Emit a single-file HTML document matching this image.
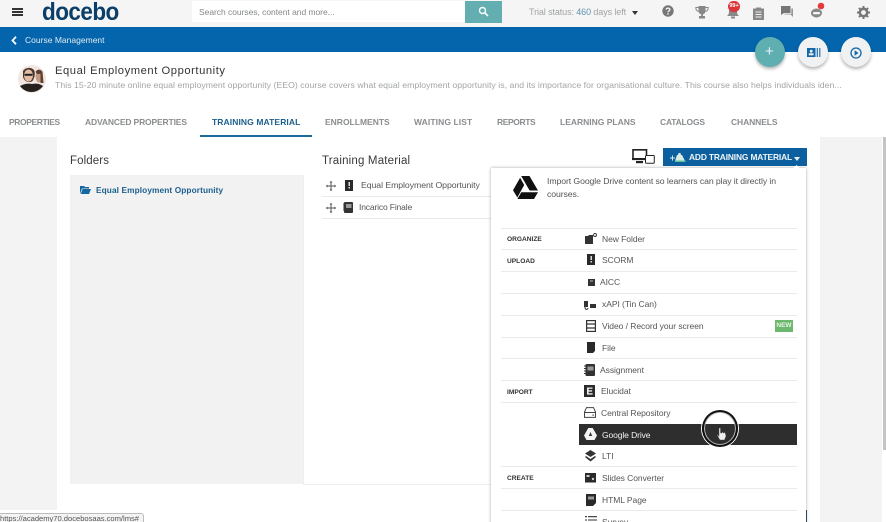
<!DOCTYPE html>
<html><head><meta charset="utf-8"><style>
html,body{margin:0;padding:0;width:886px;height:522px;overflow:hidden;background:#fff}
#w{position:relative;width:886px;height:522px;overflow:hidden;background:#fff;font-family:"Liberation Sans",sans-serif;filter:blur(.35px)}
.a,.t{position:absolute}
.t{white-space:nowrap;line-height:14px}
.tab{top:115px;font-size:8.5px;font-weight:bold;color:#8a8d8f}
.m{font-size:8.5px;color:#555;letter-spacing:-.05px}
.s{font-size:6.6px;font-weight:bold;color:#333;left:507px}
.l{position:absolute;left:501px;width:296px;height:1px;background:#ebebeb}
svg{position:absolute;overflow:visible}
</style></head><body><div id="w">
<!-- page backgrounds -->
<div class="a" style="left:0;top:137px;width:57px;height:373px;background:#f3f3f3"></div>
<div class="a" style="left:820px;top:137px;width:62px;height:385px;background:#f3f3f3"></div>
<div class="a" style="left:883px;top:137px;width:3px;height:313px;background:#c4c4c4"></div>

<!-- top bar -->
<div class="a" style="left:0;top:0;width:886px;height:27px;background:#f5f5f5"></div>
<div class="a" style="left:12px;top:8px;width:11px;height:2px;background:#333"></div>
<div class="a" style="left:12px;top:11px;width:11px;height:2px;background:#333"></div>
<div class="a" style="left:12px;top:14px;width:11px;height:2px;background:#333"></div>
<div class="t" style="left:42px;top:0;font-size:25px;line-height:24px;font-weight:bold;color:#0b3f69;letter-spacing:-.6px;transform:scaleX(.9);transform-origin:0 0">docebo</div>
<div class="a" style="left:115px;top:8px;width:2px;height:2px;border-radius:50%;background:#0b3f69"></div>
<div class="a" style="left:192px;top:1px;width:273px;height:21px;background:#fff"></div>
<div class="t" style="left:199px;top:5px;font-size:8.5px;color:#85888a;letter-spacing:-.04px">Search courses, content and more...</div>
<div class="a" style="left:465px;top:1px;width:37px;height:22px;background:#62aeb0"></div>
<svg style="left:478px;top:6px" width="11" height="11" viewBox="0 0 11 11"><circle cx="4.5" cy="4.5" r="3" fill="none" stroke="#fff" stroke-width="1.4"/><path d="M7 7l3 3" stroke="#fff" stroke-width="1.6"/></svg>
<div class="t" style="left:529px;top:5px;font-size:9px;color:#a0a3a5;letter-spacing:-.1px">Trial status: <span style="color:#5f8fb0">460</span> days left</div>
<div class="a" style="left:632px;top:11px;border:3.5px solid transparent;border-top:4px solid #333;border-bottom:0"></div>
<!-- help -->
<svg style="left:662px;top:5px" width="12" height="12" viewBox="0 0 12 12"><circle cx="6" cy="6" r="5.7" fill="#777"/><path d="M4.2 4.6C4.3 2.6 7.9 2.7 7.9 4.6 7.9 5.9 6 5.9 6 7.3" fill="none" stroke="#f5f5f5" stroke-width="1.3"/><rect x="5.3" y="8.2" width="1.4" height="1.4" fill="#f5f5f5"/></svg>
<!-- trophy -->
<svg style="left:695px;top:6px" width="14" height="13" viewBox="0 0 14 13"><path d="M3.5 0h7v5c0 2-1.5 3-2.6 3.3V10H10v2.5H4V10h2.100V8.300C5 8 3.500 7 3.500 5z" fill="#888"/><path d="M3.500 1.500H.8c0 2.500 1 3.700 3 3.900M10.500 1.500h2.700c0 2.500-1 3.700-3 3.900" fill="none" stroke="#888" stroke-width="1"/></svg>
<!-- bell -->
<svg style="left:726px;top:7px" width="14" height="12" viewBox="0 0 14 12"><path d="M7 0c3 0 4 2 4 5 0 2 1 3 2 4H1c1-1 2-2 2-4 0-3 1-5 4-5z" fill="#888"/><rect x="5" y="9.500" width="4" height="2" fill="#888"/></svg>
<div class="a" style="left:728px;top:1px;width:12px;height:11px;border-radius:6px;background:#d9363a;color:#fff;font-size:5.5px;font-weight:bold;line-height:11px;text-align:center">99+</div>
<!-- clipboard -->
<svg style="left:753px;top:7px" width="11" height="13" viewBox="0 0 11 13"><path d="M0 1.500h3V.5h5v1h3V13H0z" fill="#888"/><path d="M2.500 5h6M2.500 7.500h6M2.500 10h6" stroke="#f5f5f5" stroke-width="1"/></svg>
<!-- chat -->
<svg style="left:781px;top:6px" width="12" height="11" viewBox="0 0 12 11"><path d="M0 0h9.500v7H3L0 9z" fill="#777"/><path d="M10.300 2.500H12V11L9.500 8.500H3.500V7.800h6.800z" fill="#999"/></svg>
<!-- bot -->
<svg style="left:811px;top:3px" width="14" height="14" viewBox="0 0 14 14"><ellipse cx="5.500" cy="10" rx="5.500" ry="4.500" fill="#888"/><rect x="2" y="9" width="7" height="2.300" rx="1.100" fill="#f5f5f5"/><circle cx="10" cy="3" r="3.300" fill="#e23b3b"/></svg>
<!-- gear -->
<svg style="left:857px;top:6px" width="13" height="13" viewBox="0 0 13 13"><circle cx="6.500" cy="6.500" r="3.700" fill="none" stroke="#777" stroke-width="2.600"/><path d="M6.500 0v13M0 6.500h13M1.900 1.900l9.200 9.200M11.100 1.900l-9.200 9.200" stroke="#777" stroke-width="2" stroke-dasharray="2.200 8.600 2.200"/></svg>

<!-- blue bar -->
<div class="a" style="left:0;top:27px;width:886px;height:25px;background:#0465ac"></div>
<svg style="left:11px;top:36px" width="6" height="9" viewBox="0 0 6 9"><path d="M5 .8L1.500 4.500 5 8.200" fill="none" stroke="#fff" stroke-width="1.800"/></svg>
<div class="t" style="left:25px;top:33px;font-size:8.500px;color:#dfeaf3;letter-spacing:.01px">Course Management</div>

<!-- round buttons -->
<div class="a" style="left:755px;top:37px;width:30px;height:30px;border-radius:50%;background:#5faeb0;box-shadow:0 2px 3px rgba(0,0,0,.3)"></div>
<div class="t" style="left:765px;top:45px;font-size:15px;color:#eef;">+</div>
<div class="a" style="left:798px;top:37px;width:30px;height:30px;border-radius:50%;background:#eff1f2;box-shadow:0 2px 3px rgba(0,0,0,.3)"></div>
<svg style="left:807px;top:48px" width="14" height="9" viewBox="0 0 14 9"><rect width="8.500" height="9" fill="#1467a8"/><circle cx="4.200" cy="3.200" r="1.400" fill="#eff1f2"/><rect x="1.800" y="5.300" width="4.800" height="2" fill="#eff1f2"/><path d="M10.300 0v9M12.800 0v9" stroke="#1467a8" stroke-width="1.100"/></svg>
<div class="a" style="left:841px;top:37px;width:30px;height:30px;border-radius:50%;background:#eff1f2;box-shadow:0 2px 3px rgba(0,0,0,.3)"></div>
<svg style="left:850px;top:47px" width="12" height="12" viewBox="0 0 12 12"><circle cx="6" cy="6" r="5" fill="none" stroke="#1467a8" stroke-width="1.300"/><path d="M4.600 3.300L8.500 6 4.600 8.700z" fill="#1467a8"/></svg>

<!-- course header -->
<svg style="left:18px;top:65px" width="28" height="28" viewBox="0 0 28 28"><circle cx="14" cy="14" r="14" fill="#f2e6e0"/><path d="M2 21c4-2 8-3 12-2 5-1 8 0 11 2a14 14 0 0 1-23 0z" fill="#26211f"/><path d="M5 6c3-4 8-4 11-1 1 2 1 5 0 8-1 3-2 4-5 4-3 0-5-2-6-5z" fill="#4a352b"/><ellipse cx="10.500" cy="10.500" rx="4.500" ry="6" fill="#e4bba5"/><rect x="6.500" y="8.800" width="8" height="2" fill="#222"/><ellipse cx="21" cy="11" rx="3.500" ry="6.500" fill="#c49a82"/><path d="M17.500 7c1-3 6-3 7 0l1 11h-3V9h-3z" fill="#5d4033"/></svg>
<div class="t" style="left:55px;top:64px;font-size:11.200px;color:#333;letter-spacing:.56px">Equal Employment Opportunity</div>
<div class="t" style="left:55px;top:78px;font-size:8.700px;color:#a2a4a6;letter-spacing:.04px">This 15-20 minute online equal employment opportunity (EEO) course covers what equal employment opportunity is, and its importance for organisational culture. This course also helps individuals iden...</div>

<!-- tabs -->
<div class="t tab" style="left:9px;letter-spacing:-.4px">PROPERTIES</div>
<div class="t tab" style="left:85px;letter-spacing:-.15px">ADVANCED PROPERTIES</div>
<div class="t tab" style="left:212px;color:#1c5f8e;letter-spacing:.1px">TRAINING MATERIAL</div>
<div class="t tab" style="left:325px">ENROLLMENTS</div>
<div class="t tab" style="left:414px;letter-spacing:.1px">WAITING LIST</div>
<div class="t tab" style="left:497px;letter-spacing:-.4px">REPORTS</div>
<div class="t tab" style="left:560px">LEARNING PLANS</div>
<div class="t tab" style="left:660px;letter-spacing:-.2px">CATALOGS</div>
<div class="t tab" style="left:731px;letter-spacing:-.1px">CHANNELS</div>
<div class="a" style="left:200px;top:135px;width:112px;height:2px;background:#1c6a9e"></div>

<!-- panels -->
<div class="t" style="left:70px;top:154px;font-size:11.500px;color:#3a3a3a;letter-spacing:.1px">Folders</div>
<div class="t" style="left:322px;top:154px;font-size:11.500px;color:#3a3a3a;letter-spacing:.18px">Training Material</div>
<div class="a" style="left:70px;top:175px;width:233px;height:309px;background:#f2f2f2"></div>
<div class="a" style="left:303px;top:175px;width:188px;height:309px;border-bottom:1px solid #eee"></div>
<div class="a" style="left:303px;top:175px;width:1px;height:309px;background:#eee"></div>
<svg style="left:80px;top:186px" width="11" height="8" viewBox="0 0 11 8"><path d="M0 8V0h4l1 1h4v1.500H2L0 8z" fill="#1467a0"/><path d="M2.600 3H11L9 8H.8z" fill="#1467a0"/></svg>
<div class="t" style="left:96px;top:183px;font-size:8.300px;font-weight:bold;color:#1c5f8e;letter-spacing:.1px">Equal Employment Opportunity</div>
<svg style="left:326px;top:181px" width="10" height="10" viewBox="0 0 10 10"><path d="M5 0v10M0 5h10" stroke="#555" stroke-width="1"/><path d="M3.500 1.500L5 0l1.500 1.500zM3.500 8.500L5 10l1.500-1.500zM1.500 3.500L0 5l1.500 1.500zM8.500 3.500L10 5 8.500 6.500z" fill="#555"/></svg>
<svg style="left:345px;top:180px" width="8" height="11" viewBox="0 0 8 11"><rect width="8" height="11" fill="#2a2a2a"/><rect x="3.500" y="2" width="1.500" height="4" fill="#ddd"/><rect x="3.500" y="7" width="1.500" height="1.500" fill="#ddd"/></svg>
<div class="t" style="left:361px;top:178px;font-size:8.700px;color:#555;letter-spacing:-.05px">Equal Employment Opportunity</div>
<div class="a" style="left:322px;top:196px;width:169px;height:1px;background:#eaeaea"></div>
<svg style="left:326px;top:203px" width="10" height="10" viewBox="0 0 10 10"><path d="M5 0v10M0 5h10" stroke="#555" stroke-width="1"/><path d="M3.500 1.500L5 0l1.500 1.500zM3.500 8.500L5 10l1.500-1.500zM1.500 3.500L0 5l1.500 1.500zM8.500 3.500L10 5 8.500 6.500z" fill="#555"/></svg>
<svg style="left:343px;top:202px" width="10" height="11" viewBox="0 0 10 11"><rect x="1" width="9" height="11" rx="1" fill="#333"/><rect x="3" y="2" width="5.500" height="4" fill="#999"/><path d="M0 2h1M0 4h1M0 6h1M0 8h1" stroke="#333"/></svg>
<div class="t" style="left:359px;top:200px;font-size:8.500px;color:#555;letter-spacing:-.15px">Incarico Finale</div>
<div class="a" style="left:322px;top:218px;width:169px;height:1px;background:#eaeaea"></div>

<!-- device icon -->
<svg style="left:632px;top:149px" width="23" height="16" viewBox="0 0 23 16"><path d="M1 .8h13.500v9.500H1z" fill="none" stroke="#222" stroke-width="1.600"/><rect x="0" y="9" width="15" height="2" fill="#222"/><rect x="4" y="12" width="7" height="2.200" fill="#222"/><rect x="13.500" y="6.500" width="8.800" height="7.800" rx="1" fill="#fff" stroke="#222" stroke-width="1"/></svg>

<!-- add button -->
<div class="a" style="left:663px;top:148px;width:144px;height:18px;background:#0c609f"></div>
<svg style="left:670px;top:152px" width="16" height="10" viewBox="0 0 16 10"><path d="M0 6h5M2.500 3.500v5" stroke="#d8e8f0" stroke-width="1"/><path d="M5 9l2-6h1l.5-2h2l.5 2h1l3 6z" fill="#d8ece6"/><rect x="5" y="8.500" width="10.500" height="1.500" fill="#5fc0a0"/></svg>
<div class="t" style="left:689px;top:150px;font-size:8.400px;font-weight:bold;color:#f0f5f8;letter-spacing:-.14px">ADD TRAINING MATERIAL</div>

<!-- dropdown -->
<div class="a" style="left:491px;top:168px;width:315px;height:360px;background:#fff;box-shadow:0 0 3px rgba(0,0,0,.35)"></div>
<div class="a" style="left:794px;top:166px;width:5px;height:5px;background:#fff;transform:rotate(45deg)"></div>
<div class="a" style="left:794px;top:157px;border:3px solid transparent;border-top:4px solid #e8eef3;border-bottom:0"></div>
<svg style="left:513px;top:176px" width="25" height="23" viewBox="0 0 25 23"><path d="M8.200 0h8.300l8.500 14.500h-8.400zM7.100 1.800L11.200 9 4.300 21.500 0 14.300zM8.300 16.200H25l-4 6.800H4.400z" fill="#111"/></svg>
<div class="t" style="left:547px;top:175px;font-size:8.700px;color:#555;line-height:13px;letter-spacing:-.09px">Import Google Drive content so learners can play it directly in<br>courses.</div>

<div class="l" style="top:228px"></div><div class="l" style="top:249px"></div><div class="l" style="top:271px"></div><div class="l" style="top:293px"></div><div class="l" style="top:315px"></div><div class="l" style="top:337px"></div><div class="l" style="top:358px"></div><div class="l" style="top:380px"></div><div class="l" style="top:402px"></div><div class="l" style="top:466px"></div><div class="l" style="top:488px"></div><div class="l" style="top:510px"></div>

<div class="t s" style="top:233px">ORGANIZE</div>
<div class="t s" style="top:255px">UPLOAD</div>
<div class="t s" style="top:386px">IMPORT</div>
<div class="t s" style="top:472px">CREATE</div>

<svg style="left:585px;top:233px" width="12" height="11" viewBox="0 0 12 11"><path d="M0 3h3l1-1h4v9H0z" fill="#333"/><circle cx="10" cy="2" r="1.500" fill="none" stroke="#333" stroke-width=".9"/></svg>
<div class="t m" style="left:602px;top:232px">New Folder</div>
<svg style="left:587px;top:254px" width="8" height="12" viewBox="0 0 8 12"><rect width="8" height="11" fill="#2a2a2a"/><rect x="3.500" y="2" width="1.500" height="4" fill="#ddd"/><rect x="3.500" y="7" width="1.500" height="1.500" fill="#ddd"/></svg>
<div class="t m" style="left:602px;top:253px">SCORM</div>
<svg style="left:588px;top:279px" width="7" height="7" viewBox="0 0 7 7"><rect width="7" height="7" fill="#333"/><rect x="2" y="1.500" width="3" height="1" fill="#bbb"/></svg>
<div class="t m" style="left:600px;top:275px">AICC</div>
<svg style="left:584px;top:301px" width="13" height="9" viewBox="0 0 13 9"><rect x="0" y="0" width="4" height="6" fill="#333"/><path d="M1 6c0 3 3 3 3 1" fill="none" stroke="#333"/><rect x="6" y="3" width="6" height="4" fill="#333"/></svg>
<div class="t m" style="left:602px;top:297px">xAPI (Tin Can)</div>
<svg style="left:586px;top:320px" width="10" height="12" viewBox="0 0 10 12"><rect x=".6" y=".6" width="8.800" height="10.800" fill="none" stroke="#333" stroke-width="1.200"/><path d="M0 4h10M0 8h10" stroke="#333" stroke-width="1.200"/></svg>
<div class="t m" style="left:602px;top:319px">Video / Record your screen</div>
<div class="a" style="left:775px;top:320px;width:18px;height:12px;background:#6cb86c;color:#e8f4e8;font-size:6.500px;font-weight:bold;line-height:12px;text-align:center">NEW</div>
<svg style="left:587px;top:342px" width="8" height="11" viewBox="0 0 8 11"><path d="M0 0h8v9l-2 2H0z" fill="#2a2a2a"/></svg>
<div class="t m" style="left:602px;top:341px">File</div>
<svg style="left:584px;top:364px" width="11" height="12" viewBox="0 0 11 12"><rect x="1.500" width="9.500" height="12" rx="1" fill="#333"/><rect x="3.500" y="2.500" width="6" height="4" fill="#999"/><path d="M0 2h1.500M0 4.500h1.500M0 7h1.500M0 9.500h1.500" stroke="#333"/></svg>
<div class="t m" style="left:600px;top:363px">Assignment</div>
<svg style="left:584px;top:385px" width="11" height="12" viewBox="0 0 11 12"><rect width="11" height="12" fill="#2a2a2a"/><path d="M3 2.500h5.500v1.300H4.600v1.500h3.500v1.300H4.600v1.700h4v1.300H3z" fill="#eee"/></svg>
<div class="t m" style="left:601px;top:384px">Elucidat</div>
<svg style="left:584px;top:407px" width="12" height="11" viewBox="0 0 12 11"><path d="M2.500 .6h7L11.500 5v5.400H.5V5zM.5 5.500h11" fill="none" stroke="#444" stroke-width="1"/><rect x="8.500" y="7.500" width="1.300" height="1.300" fill="#444"/></svg>
<div class="t m" style="left:601px;top:406px">Central Repository</div>

<div class="a" style="left:579px;top:424px;width:218px;height:21px;background:#2e2e2e"></div>
<svg style="left:584px;top:428px" width="13" height="12" viewBox="0 0 13 12"><path d="M4.300 0h4.400L13 7.500 10.500 12h-8L0 7.500z" fill="#f4f4f4"/><path d="M6.500 4L8.200 8H4.800z" fill="#333"/></svg>
<div class="t" style="left:602px;top:428px;font-size:8.500px;color:#f2f2f2;letter-spacing:-.1px">Google Drive</div>

<svg style="left:585px;top:450px" width="11" height="12" viewBox="0 0 11 12"><path d="M5.500 0L11 3.500 5.500 7 0 3.500z" fill="#333"/><path d="M1 6l4.500 3L10 6l1 1-5.500 4.500L0 7z" fill="#333"/></svg>
<div class="t m" style="left:602px;top:449px">LTI</div>
<svg style="left:585px;top:473px" width="12" height="10" viewBox="0 0 12 10"><rect width="11" height="9.500" fill="#2a2a2a"/><rect x="1.500" y="2" width="3" height="2" fill="#ccc"/><circle cx="8" cy="6" r="1.200" fill="#ccc"/></svg>
<div class="t m" style="left:602px;top:471px">Slides Converter</div>
<svg style="left:586px;top:494px" width="10" height="12" viewBox="0 0 10 12"><path d="M0 0h10v9l-3 3H0z" fill="#2a2a2a"/><rect x="2" y="2.500" width="6" height="3" fill="#999"/></svg>
<div class="t m" style="left:602px;top:493px">HTML Page</div>
<svg style="left:585px;top:516px" width="12" height="9" viewBox="0 0 12 9"><path d="M3 .7h9M3 4h9M3 7.300h9M0 .7h2M0 4h2M0 7.300h2" stroke="#333" stroke-width="1.100"/></svg>
<div class="t m" style="left:602px;top:515px">Survey</div>
<div class="a" style="left:806px;top:510px;width:1px;height:12px;background:#345"></div>

<!-- cursor circle -->
<div class="a" style="left:702px;top:410px;width:32px;height:33px;border:2px solid #111;border-radius:50%;box-shadow:0 0 0 1px #fff,inset 0 0 0 1px #bbb"></div>
<svg style="left:717px;top:428px" width="9" height="12" viewBox="0 0 9 12"><path d="M2 0h1.500v5H5V4h1v1h1V4.500h1L9 8 7.500 12H3L0 7h1l1 1.500z" fill="#eee" stroke="#444" stroke-width=".4"/></svg>

<!-- status link -->
<div class="a" style="left:-2px;top:513px;width:144px;height:12px;background:#f4f4f4;border:1px solid #bbb;border-radius:3px"></div>
<div class="t" style="left:0;top:512px;font-size:7.600px;color:#555;letter-spacing:-.02px">https://academy70.docebosaas.com/lms#</div>
</div></body></html>
